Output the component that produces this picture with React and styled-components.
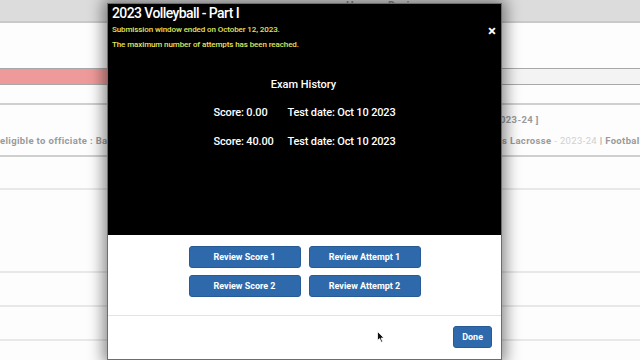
import React from 'react';
import styled, { createGlobalStyle } from 'styled-components';

const GlobalStyle = createGlobalStyle`
  html, body {
    margin: 0;
    padding: 0;
    width: 640px;
    height: 360px;
    overflow: hidden;
    background: #fdfdfd;
    font-family: Roboto, "Liberation Sans", sans-serif;
  }
`;

// page behind the dialog
const Page = styled.div`
  position: relative;
  width: 640px;
  height: 360px;
  overflow: hidden;
  background: #fdfdfd;
`;

const TopBar = styled.div`
  height: 23px;
  background: #dcdcdc;
  border-bottom: 2px solid #c9c9c9;
  padding-left: 346px;
  box-sizing: border-box;
  color: #8a8a8a;
  font-size: 11px;
  font-weight: 700;
  line-height: 12px;
`;

const Gap = styled.div`
  height: ${p => p.h}px;
`;

const Band = styled.div`
  height: 15px;
  border-top: 1px solid #a8a8a8;
  border-bottom: 1px solid #a8a8a8;
  display: flex;
`;

const BandRed = styled.div`
  width: 330px;
  background: #ef9a9a;
`;

const BandRest = styled.div`
  flex: 1;
  background: #f3f3f3;
`;

const Rule = styled.div`
  height: 2px;
  background: #cfcfcf;
`;

const InfoBlock = styled.div`
  height: 50px;
  display: flex;
  flex-direction: column;
  justify-content: center;
  gap: 9px;
  font-size: 9.5px;
  font-weight: 700;
  letter-spacing: 0.35px;
  color: #9a9a9a;
  white-space: nowrap;
  overflow: hidden;
`;

const InfoLine = styled.div`
  display: flex;
  line-height: 12px;
`;

const Segment = styled.span`
  flex: none;
  width: ${p => p.w}px;
  overflow: hidden;
  text-align: ${p => p.align || 'left'};
`;

const Faded = styled.span`
  color: #d0d0d0;
  font-weight: 400;
`;

const Row = styled.div`
  height: ${p => p.h}px;
  border-bottom: 2px solid #e8e8e8;
  box-sizing: border-box;
`;

// dialog
const Dialog = styled.div`
  position: absolute;
  left: 107px;
  top: 3px;
  width: 395px;
  height: 357px;
  border: 1px solid #6d6d6d;
  box-shadow: 0 0 14px 4px rgba(0, 0, 0, 0.45);
  display: flex;
  flex-direction: column;
  background: #fff;
  box-sizing: border-box;
`;

const DarkPane = styled.div`
  flex: none;
  height: 231px;
  box-sizing: border-box;
  background: #000;
  color: #fff;
  display: flex;
  flex-direction: column;
  padding: 1px 6px 0 4px;
  position: relative;
`;

const Title = styled.div`
  font-size: 14px;
  font-weight: 500;
  line-height: 16px;
  letter-spacing: -0.6px;
`;

const Notice = styled.div`
  color: #e4e45a;
  font-size: 8px;
  font-weight: 500;
  line-height: 10px;
  letter-spacing: -0.1px;
  margin-top: ${p => p.mt}px;
`;

const Close = styled.div`
  position: absolute;
  right: 5px;
  top: 20px;
  font-size: 15px;
  font-weight: 700;
  line-height: 15px;
`;

const History = styled.div`
  margin-top: 28px;
  display: flex;
  flex-direction: column;
  align-items: center;
  font-size: 11px;
  font-weight: 500;
`;

const HistoryTitle = styled.div`
  margin-bottom: 15px;
`;

const HistoryTable = styled.div`
  display: grid;
  grid-template-columns: 74px auto;
  row-gap: 15px;
  margin-left: 2px;
  line-height: 14px;
  letter-spacing: -0.15px;
`;

const LightPane = styled.div`
  flex: 1;
  display: flex;
  flex-direction: column;
`;

const ButtonGrid = styled.div`
  flex: none;
  height: 81px;
  display: grid;
  grid-template-columns: 112px 112px;
  column-gap: 8px;
  row-gap: 7px;
  justify-content: center;
  align-content: start;
  padding-top: 11px;
  box-sizing: border-box;
  border-bottom: 1px solid #e3e3e3;
`;

const BlueButton = styled.button`
  height: 22px;
  padding: 0 ${p => (p.small ? '8px' : '0')};
  background: #2e6aab;
  border: 1px solid #275b96;
  border-radius: 3px;
  color: #fff;
  font-family: Roboto, "Liberation Sans", sans-serif;
  font-size: 9px;
  font-weight: 700;
  cursor: pointer;
`;

const Footer = styled.div`
  flex: 1;
  display: flex;
  justify-content: flex-end;
  align-items: center;
  padding-right: 9px;
  padding-bottom: 2px;
`;

const Cursor = styled.svg`
  position: absolute;
  left: 377px;
  top: 331px;
`;

export default function App() {
  return (
    <>
      <GlobalStyle />
      <Page>
        <TopBar>Herman Davis</TopBar>
        <Gap h={45} />
        <Band>
          <BandRed />
          <BandRest />
        </Band>
        <Gap h={18} />
        <Rule />
        <InfoBlock>
          <InfoLine>
            <Segment w={500} align="right">[ Officials Registration - 2</Segment>
            <span>023-24 ]</span>
          </InfoLine>
          <InfoLine>
            <Segment w={112}>eligible to officiate : Baseball - 2023-24 |</Segment>
            <Segment w={390} align="right">Basketball - 2023-24 | Boy</Segment>
            <span>s Lacrosse&nbsp;<Faded>- 2023-24</Faded>&nbsp;| Football - 2023-24</span>
          </InfoLine>
        </InfoBlock>
        <Rule />
        <Row h={33} />
        <Row h={83} />
        <Row h={34} />
        <Row h={34} />

        <Dialog>
          <DarkPane>
            <Title>2023 Volleyball - Part I</Title>
            <Notice mt={4}>Submission window ended on October 12, 2023.</Notice>
            <Notice mt={5}>The maximum number of attempts has been reached.</Notice>
            <Close>×</Close>
            <History>
              <HistoryTitle>Exam History</HistoryTitle>
              <HistoryTable>
                <span>Score: 0.00</span>
                <span>Test date: Oct 10 2023</span>
                <span>Score: 40.00</span>
                <span>Test date: Oct 10 2023</span>
              </HistoryTable>
            </History>
          </DarkPane>
          <LightPane>
            <ButtonGrid>
              <BlueButton>Review Score 1</BlueButton>
              <BlueButton>Review Attempt 1</BlueButton>
              <BlueButton>Review Score 2</BlueButton>
              <BlueButton>Review Attempt 2</BlueButton>
            </ButtonGrid>
            <Footer>
              <BlueButton small>Done</BlueButton>
            </Footer>
          </LightPane>
        </Dialog>

        <Cursor width="8" height="12" viewBox="0 0 8 12">
          <path d="M0.5 0.5 L0.5 9.5 L2.6 7.6 L4.2 11.2 L5.6 10.6 L4.1 7.1 L7 7 Z" fill="#111" stroke="#fff" strokeWidth="0.8" />
        </Cursor>
      </Page>
    </>
  );
}
